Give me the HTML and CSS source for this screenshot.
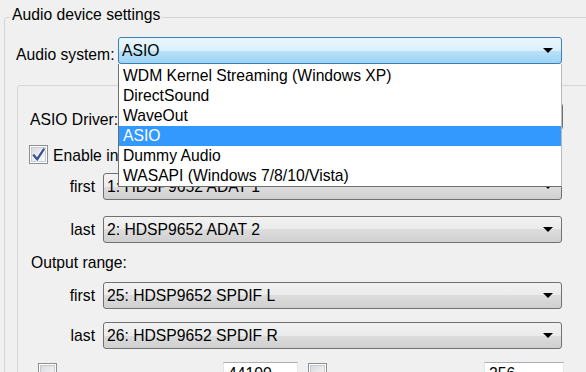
FILE: index.html
```html
<!DOCTYPE html>
<html>
<head>
<meta charset="utf-8">
<link rel="stylesheet" href="styles.css">
</head>
<body>
<div class="group outer">
  <div class="group-title">Audio device settings</div>
  <div class="row sys-row">
    <span class="sys-lbl">Audio system:</span>
    <div class="combo combo-active sys-combo">
      <span class="combo-text">ASIO</span>
      <svg class="arrow" width="10" height="5" viewBox="0 0 10 5"><polygon points="0,0 10,0 5,5" fill="#000"/></svg>
      <ul class="dropdown">
        <li>WDM Kernel Streaming (Windows XP)</li>
        <li>DirectSound</li>
        <li>WaveOut</li>
        <li class="sel">ASIO</li>
        <li>Dummy Audio</li>
        <li>WASAPI (Windows 7/8/10/Vista)</li>
      </ul>
    </div>
  </div>
  <div class="group inner">
    <div class="row driver-row">
      <span class="driver-lbl">ASIO Driver:</span>
      <div class="combo driver-combo">
        <span class="combo-text">ASIO Hammerfall DSP</span>
        <svg class="arrow" width="10" height="5" viewBox="0 0 10 5"><polygon points="0,0 10,0 5,5" fill="#000"/></svg>
      </div>
    </div>
    <div class="row check-row">
      <svg class="check" width="19" height="19" viewBox="0 0 19 19">
        <defs><linearGradient id="cg" x1="0" y1="0" x2="1" y2="1"><stop offset="0" stop-color="#d6d9dd"/><stop offset="1" stop-color="#fbfbfb"/></linearGradient></defs>
        <rect x="0.5" y="0.5" width="18" height="18" fill="#fff" stroke="#8e8f8f"/>
        <rect x="2.5" y="2.5" width="14" height="14" fill="url(#cg)" stroke="#c6cacf"/>
        <path d="M4.2 9.6 L8.2 14.2 L15.2 3.6" fill="none" stroke="#fff" stroke-width="4" stroke-linejoin="miter"/>
        <path d="M4.2 9.6 L8.2 14.2 L15.2 3.6" fill="none" stroke="#3b5595" stroke-width="2.4" stroke-linejoin="miter"/>
      </svg>
      <span class="check-lbl">Enable input channels</span>
    </div>
    <div class="row in-first">
      <span class="range-lbl">first</span>
      <div class="combo range-combo">
        <span class="combo-text">1: HDSP9652 ADAT 1</span>
        <svg class="arrow" width="10" height="5" viewBox="0 0 10 5"><polygon points="0,0 10,0 5,5" fill="#000"/></svg>
      </div>
    </div>
    <div class="row in-last">
      <span class="range-lbl">last</span>
      <div class="combo range-combo">
        <span class="combo-text">2: HDSP9652 ADAT 2</span>
        <svg class="arrow" width="10" height="5" viewBox="0 0 10 5"><polygon points="0,0 10,0 5,5" fill="#000"/></svg>
      </div>
    </div>
    <div class="out-lbl">Output range:</div>
    <div class="row out-first">
      <span class="range-lbl">first</span>
      <div class="combo range-combo">
        <span class="combo-text">25: HDSP9652 SPDIF L</span>
        <svg class="arrow" width="10" height="5" viewBox="0 0 10 5"><polygon points="0,0 10,0 5,5" fill="#000"/></svg>
      </div>
    </div>
    <div class="row out-last">
      <span class="range-lbl">last</span>
      <div class="combo range-combo">
        <span class="combo-text">26: HDSP9652 SPDIF R</span>
        <svg class="arrow" width="10" height="5" viewBox="0 0 10 5"><polygon points="0,0 10,0 5,5" fill="#000"/></svg>
      </div>
    </div>
    <div class="row bottom-row">
      <svg class="check small-check" width="19" height="19" viewBox="0 0 19 19">
        <rect x="0.5" y="0.5" width="18" height="18" fill="#fff" stroke="#8e8f8f"/>
        <rect x="2.5" y="2.5" width="14" height="14" fill="url(#cg)" stroke="#c6cacf"/>
      </svg>
      <div class="textbox tb1">44100</div>
      <svg class="check small-check cb2" width="19" height="19" viewBox="0 0 19 19">
        <rect x="0.5" y="0.5" width="18" height="18" fill="#fff" stroke="#8e8f8f"/>
        <rect x="2.5" y="2.5" width="14" height="14" fill="url(#cg)" stroke="#c6cacf"/>
      </svg>
      <div class="textbox tb2">256</div>
    </div>
  </div>
</div>
</body>
</html>
```
FILE: styles.css
```css
* { box-sizing: border-box; }
html, body { margin: 0; padding: 0; }
body {
  background: #f0f0f0;
  font-family: "Liberation Sans", Arial, sans-serif;
  font-size: 15.7px;
  color: #000;
  width: 586px;
  height: 372px;
  overflow: hidden;
}
.group { border: 1px solid #d5d5d5; border-radius: 3px; }
.outer { margin: 17px 0 0 4px; width: 640px; height: 520px; }
.group-title {
  width: max-content;
  margin: -12px 0 0 5px;
  padding: 0 2px;
  line-height: 18px;
  background: #f0f0f0;
}
.row { display: flex; align-items: flex-start; }
.row > * { flex: none; }
.sys-row { margin-top: 13px; padding-left: 11px; }
.sys-lbl { width: 102px; margin-top: 9px; line-height: 18px; white-space: nowrap; }
.combo {
  position: relative;
  display: flex;
  align-items: center;
  height: 27px;
  border: 1px solid #707070;
  border-radius: 3px;
  padding: 0 8px 0 3px;
  line-height: 25px;
  background: linear-gradient(#f2f2f2, #ebebeb 50%, #dddddd 50%, #cfcfcf);
}
.combo-text { flex: 1; white-space: nowrap; overflow: hidden; }
.arrow { flex: none; display: block; }
.combo-active {
  border-color: #3c7fb1;
  background: linear-gradient(#eaf6fd, #d9f0fc 50%, #b9e2fa 50%, #9ed3f3);
}
.sys-combo { width: 444px; }
.dropdown {
  position: absolute;
  left: -1px;
  top: calc(100% + 1px);
  width: 444px;
  margin: 0;
  padding: 2px 0 0;
  list-style: none;
  background: #fff;
  border: 1px solid #6e6e6e;
  border-top: none;
  border-right-color: #b9b9b9;
  z-index: 10;
}
.dropdown li { height: 20px; line-height: 20px; padding-left: 4px; white-space: nowrap; }
.dropdown li.sel { background: #3399ff; color: #fff; }
.inner { margin: 21px 0 0 12px; width: 620px; height: 420px; }
.driver-row { margin-top: 17px; padding-left: 12px; }
.driver-lbl { width: 88px; margin-top: 8px; line-height: 18px; white-space: nowrap; }
.driver-combo { width: 445px; }
.check-row { margin-top: 15px; padding-left: 11px; }
.check { display: block; width: 19px; height: 19px; }
.check-lbl { margin-left: 5px; margin-top: 2px; line-height: 18px; white-space: nowrap; }
.range-lbl { width: 77px; text-align: right; line-height: 27px; }
.range-combo { width: 459px; margin-left: 8px; }
.in-first { margin-top: 8px; }
.in-last { margin-top: 16px; }
.out-lbl { margin-top: 11px; padding-left: 13px; line-height: 18px; }
.out-first { margin-top: 10px; }
.out-last { margin-top: 13px; }
.bottom-row { margin-top: 13px; padding-left: 20px; }
.small-check { margin-top: 1px; }
.textbox {
  background: #fff;
  border: 1px solid #abadb3;
  border-color: #abadb3 #e3e9ef #e3e9ef #e2e3ea;
  height: 26px;
  padding: 2px 4px;
  line-height: 18px;
}
.tb1 { margin-left: 166px; width: 75px; }
.cb2 { margin-left: 10px; }
.tb2 { margin-left: 157px; width: 80px; }
```
